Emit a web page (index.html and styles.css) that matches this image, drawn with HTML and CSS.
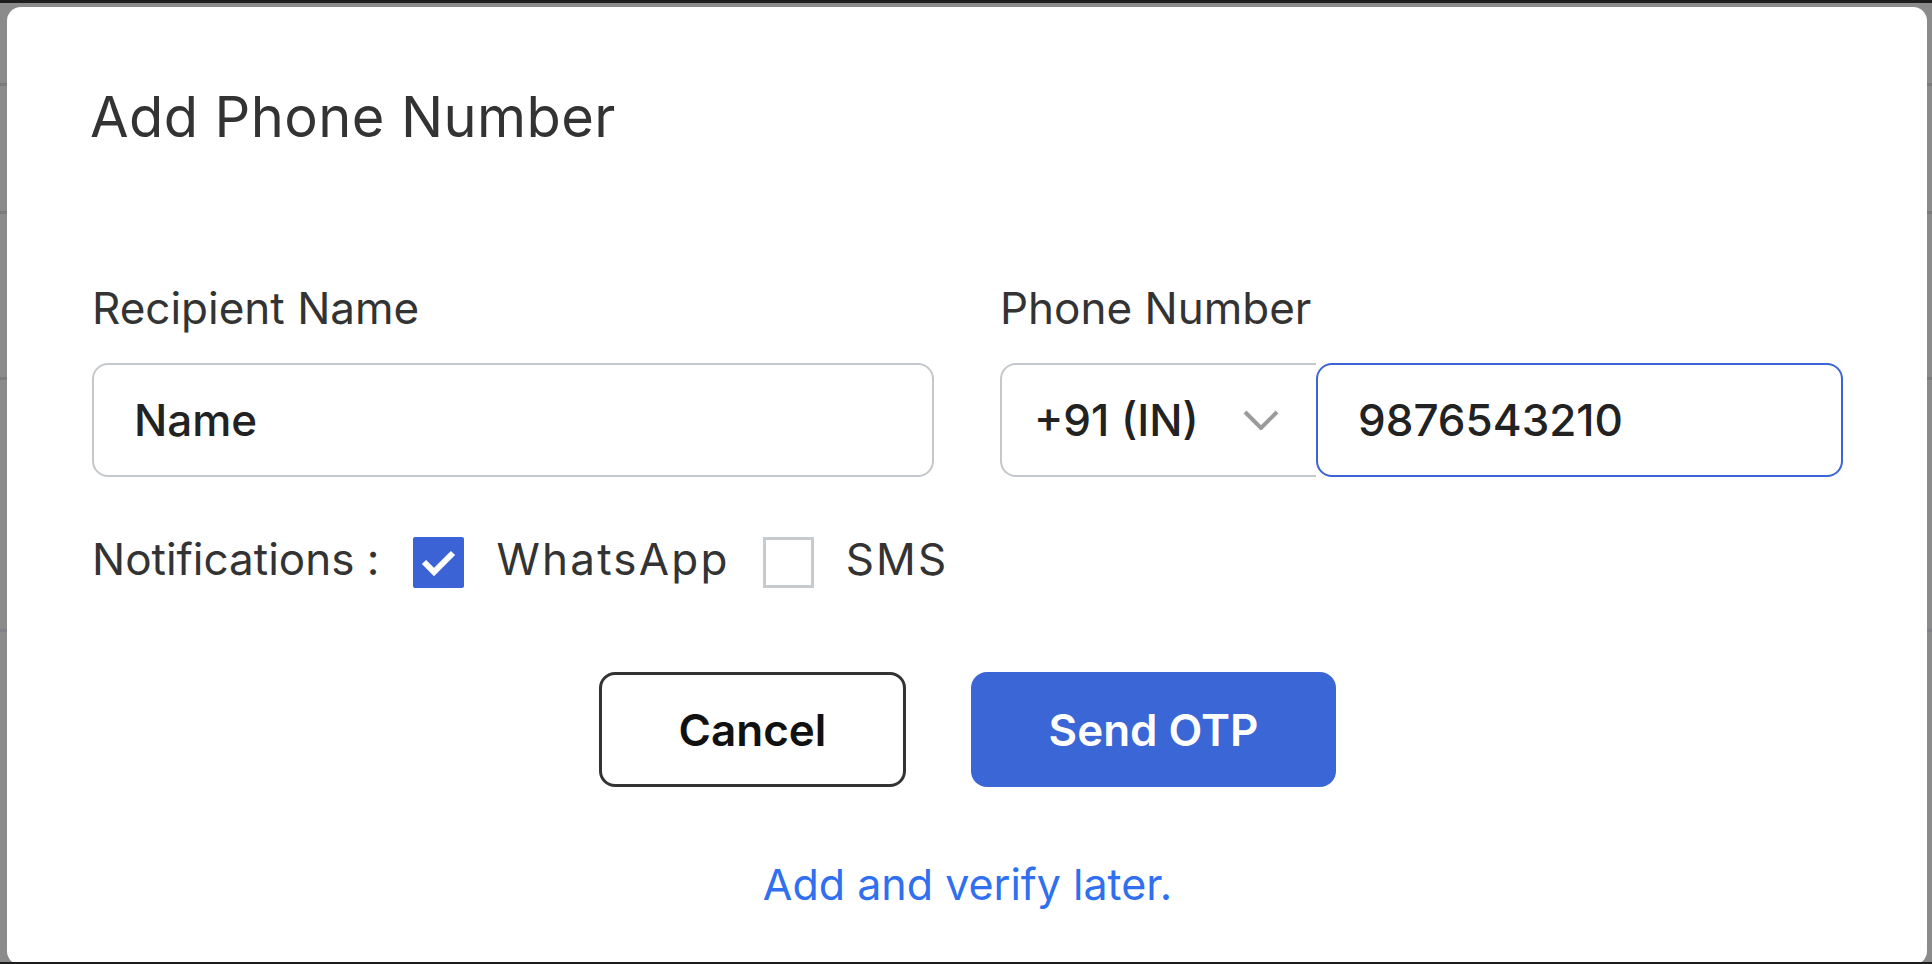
FILE: index.html
```html
<!DOCTYPE html>
<html lang="en">
<head>
<meta charset="utf-8">
<title>Add Phone Number</title>
<link rel="stylesheet" href="styles.css">
</head>
<body>
<div class="topbar"></div>
<div class="stage">
  <div class="modal">
    <h1 class="title">Add Phone Number</h1>
    <div class="fields">
      <div class="field">
        <label class="label">Recipient Name</label>
        <div class="input">Name</div>
      </div>
      <div class="field">
        <label class="label">Phone Number</label>
        <div class="phone">
          <div class="select">
            <span>+91 (IN)</span>
            <svg class="chevron" width="36" height="20" viewBox="0 0 36 20"><path d="M2 2 L18 18 L34 2" fill="none" stroke="#9b9b9b" stroke-width="4"/></svg>
          </div>
          <div class="input input-focus">9876543210</div>
        </div>
      </div>
    </div>
    <div class="notify">
      <span class="notify-label">Notifications :</span>
      <span class="check check-on"><svg width="51" height="51" viewBox="0 0 51 51"><path d="M11 25 L21 35 L40 16" fill="none" stroke="#fff" stroke-width="6"/></svg></span>
      <span class="opt">WhatsApp</span>
      <span class="check check-off"></span>
      <span class="opt">SMS</span>
    </div>
    <div class="actions">
      <button class="btn btn-cancel">Cancel</button>
      <button class="btn btn-send">Send OTP</button>
    </div>
    <a class="later">Add and verify later.</a>
  </div>
</div>
<div class="bottombar"></div>
</body>
</html>
```

FILE: styles.css
```css
html, body {
  margin: 0;
  padding: 0;
}
body {
  height: 964px;
  overflow: hidden;
  background-color: #8b8b8b;
  background-image: linear-gradient(to bottom,
    transparent 83px, #7b7b7b 83px, #7b7b7b 86px, transparent 86px,
    transparent 211px, #7b7b7b 211px, #7b7b7b 214px, transparent 214px,
    transparent 377px, #7b7b7b 377px, #7b7b7b 380px, transparent 380px,
    transparent 629px, #80808a 629px, #80808a 632px, transparent 632px);
  font-family: "Inter", "Liberation Sans", sans-serif;
}
.topbar {
  height: 3px;
  background: #1d1d1d;
}
.stage {
  padding: 4px 5px 0 7px;
}
.modal {
  background: #fff;
  border-radius: 14px;
  height: 958px;
  box-sizing: border-box;
  padding: 76px 84px 0 85px;
}
.title {
  margin: 0 0 0 -2px;
  font-size: 56px;
  font-weight: 400;
  line-height: 68px;
  letter-spacing: 0.4px;
  color: #333;
}
.fields {
  display: grid;
  grid-template-columns: 842px 843px;
  column-gap: 66px;
  margin-top: 130px;
}
.label {
  display: block;
  font-size: 44px;
  line-height: 54px;
  color: #333;
  margin-bottom: 28px;
}
.input {
  height: 114px;
  box-sizing: border-box;
  border: 2px solid #c4c8cd;
  border-radius: 16px;
  padding-left: 40px;
  display: flex;
  align-items: center;
  font-size: 44px;
  font-weight: 500;
  color: #222;
}
.phone {
  display: flex;
}
.select {
  width: 316px;
  height: 114px;
  box-sizing: border-box;
  border: 2px solid #c4c8cd;
  border-right: none;
  border-radius: 16px 0 0 16px;
  display: flex;
  align-items: center;
  justify-content: space-between;
  padding: 0 37px 0 32px;
  font-size: 44px;
  font-weight: 500;
  color: #222;
}
.chevron {
  display: block;
}
.input-focus {
  flex: 1;
  border-color: #3b64d8;
}
.notify {
  display: flex;
  align-items: center;
  height: 51px;
  margin-top: 60px;
  font-size: 44px;
  color: #333;
}
.notify-label, .opt {
  padding-bottom: 8px;
}
.opt {
  letter-spacing: 2.2px;
}
.check {
  width: 51px;
  height: 51px;
  box-sizing: border-box;
  flex: none;
}
.check svg {
  display: block;
}
.check-on {
  background: #3b63d6;
  border-radius: 2px;
  margin: 0 33px 0 33px;
}
.check-off {
  border: 3px solid #c6cbd0;
  margin: 0 32px 0 33px;
}
.actions {
  display: flex;
  justify-content: center;
  gap: 65px;
  margin-top: 84px;
}
.btn {
  height: 115px;
  border-radius: 16px;
  font-family: "Inter", "Liberation Sans", sans-serif;
  font-size: 44px;
  font-weight: 600;
  padding: 0;
  box-sizing: border-box;
}
.btn-cancel {
  width: 307px;
  background: #fff;
  border: 3px solid #333;
  color: #111;
}
.btn-send {
  width: 365px;
  background: #3b66d6;
  border: none;
  color: #fff;
}
.later {
  display: block;
  text-align: center;
  margin-top: 72px;
  font-size: 43px;
  line-height: 51px;
  color: #2f6ff0;
}
.bottombar {
  position: fixed;
  left: 0;
  right: 0;
  bottom: 0;
  height: 2px;
  background: #1d1d1d;
}
```
